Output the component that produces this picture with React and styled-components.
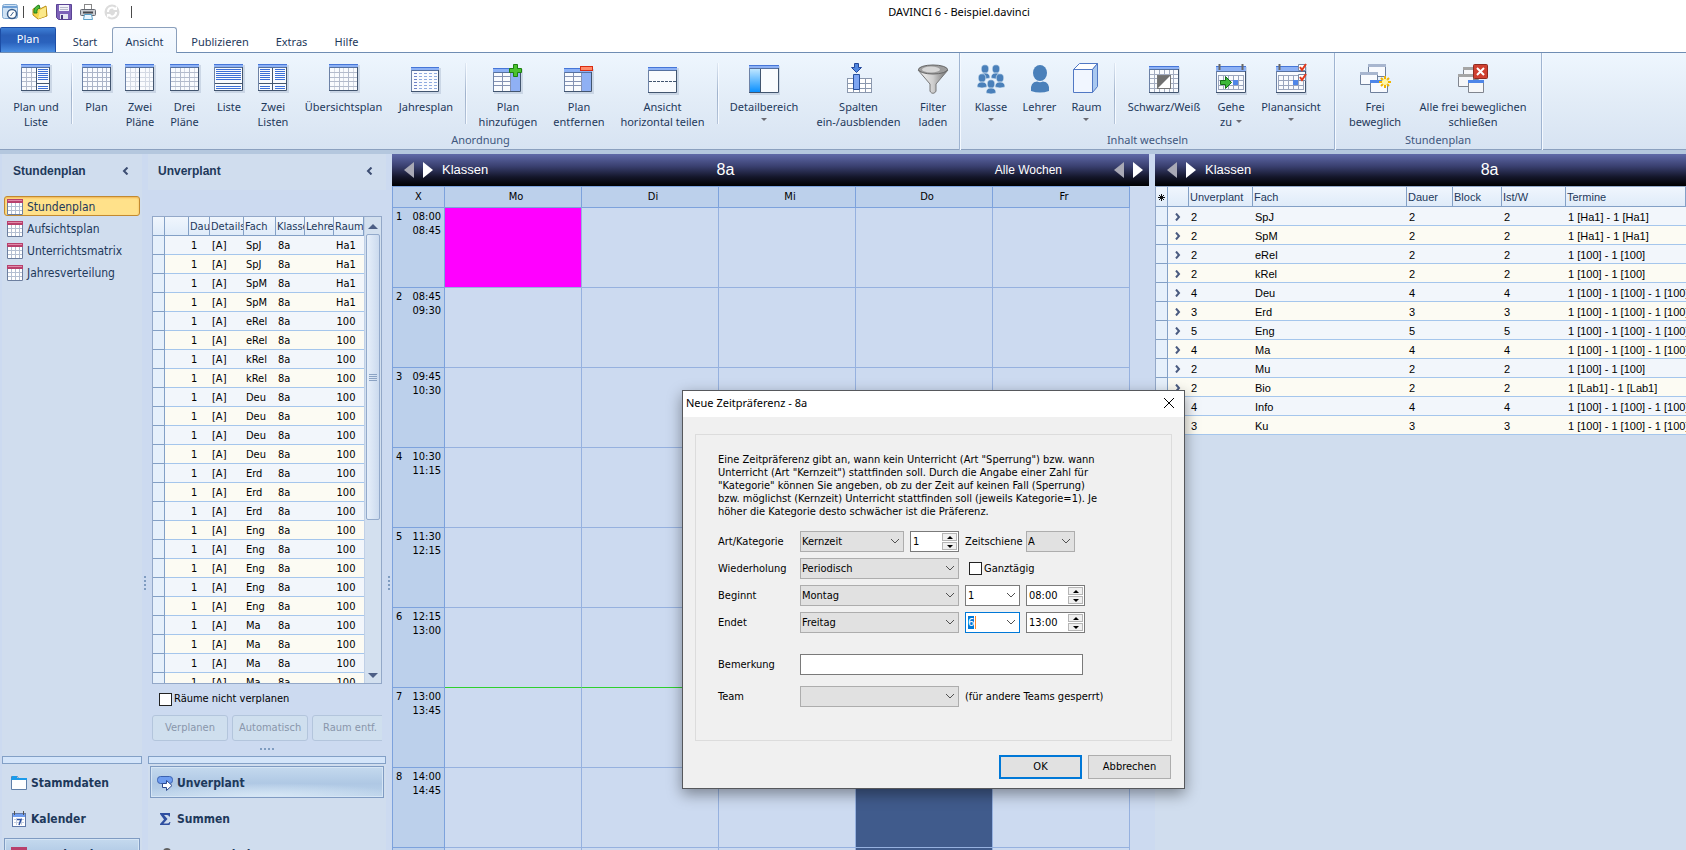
import React, { useEffect, useRef } from 'react';
import styled, { createGlobalStyle, css } from 'styled-components';

const tahoma = '"DejaVu Sans Condensed", "DejaVu Sans", sans-serif';
const segoe = '"Noto Sans", "Open Sans", sans-serif';
const arial = '"Liberation Sans", Arial, sans-serif';

const GlobalStyle = createGlobalStyle`
  * { box-sizing: border-box; }
  body { margin: 0; background: #ccdaf0; font: 11px/14px ${tahoma}; color: #000; }
  button, input, select { font: inherit; color: inherit; margin: 0; }
  svg { display: block; flex: none; }
`;

const Window = styled.div`
  position: relative;
  display: flex;
  flex-direction: column;
  height: 100vh;
  overflow: hidden;
`;

/* ---------- title bar ---------- */
const TitleBar = styled.header`
  display: flex;
  align-items: center;
  height: 24px;
  background: #fff;
`;
const QuickTools = styled.div`
  display: flex;
  align-items: center;
  gap: 8px;
  width: 232px;
  padding-left: 2px;
`;
const IconButton = styled.button`
  display: block;
  padding: 0;
  border: 0;
  background: none;
`;
const ToolDivider = styled.span`
  width: 1px;
  height: 12px;
  margin: 0 ${(p) => (p.$end ? 4 : 0)}px 0 ${(p) => (p.$end ? 3 : -3)}px;
  background: #4a4a4a;
`;
const Title = styled.h1`
  flex: 1;
  margin: 0;
  text-align: center;
  font: 400 11px/16px ${segoe};
`;

/* ---------- ribbon ---------- */
const Tabs = styled.nav`
  display: flex;
  align-items: flex-end;
  height: 29px;
  padding-top: 3px;
  background: #fff;
  border-bottom: 1px solid #6f8db3;
  font: 12px/16px ${segoe};
`;
const FileTab = styled.button`
  width: 56px;
  height: 25px;
  margin-right: 2px;
  padding: 0 0 2px;
  border: 1px solid #1d4ea6;
  border-bottom: 0;
  border-radius: 2px 2px 0 0;
  background: linear-gradient(#3d7fd6, #2a5fb8 30%, #2a62bd 60%, #4a8ee2);
  color: #fff;
  font-size: 11px;
`;
const Tab = styled.button`
  width: ${(p) => p.$w}px;
  height: 25px;
  padding: 3px 0 0;
  border: 1px solid transparent;
  border-bottom: 0;
  background: none;
  color: #1e395b;
  font-size: 11px;
  ${(p) => p.$active && css`
    margin-bottom: -1px;
    height: 26px;
    padding-bottom: 1px;
    border-color: #8ba0bc;
    border-radius: 3px 3px 0 0;
    background: linear-gradient(#f6faff, #edf5fd);
  `}
`;
const Ribbon = styled.section`
  display: flex;
  height: 101px;
  flex: none;
  background: linear-gradient(#eef6fe, #e2ecf7 50%, #d7e3f2);
  border-bottom: 4px solid #b4c7de;
  box-shadow: inset 0 -1px 0 #8ba0bf;
  font: 11px/15px ${segoe};
  color: #1e395b;
`;
const Group = styled.div`
  display: flex;
  flex-direction: column;
  padding: 10px 5px 0 ${(p) => p.$pad}px;
  border-right: 1px solid #9fb4d1;
  box-shadow: 1px 0 0 #f4f9ff;
`;
const GroupTools = styled.div`
  display: flex;
  height: 68px;
`;
const GroupName = styled.div`
  padding-top: 1px;
  text-align: center;
  color: #3f577e;
`;
const Tool = styled.button`
  display: flex;
  flex-direction: column;
  align-items: center;
  gap: 4px;
  width: ${(p) => p.$w}px;
  padding: 0;
  border: 0;
  background: none;
  white-space: nowrap;
`;
const ToolLabel = styled.span`
  display: block;
  text-align: center;
`;
const ToolRule = styled.span`
  width: 1px;
  height: 61px;
  margin: 0 ${(p) => p.$after}px 0 ${(p) => p.$before}px;
  background: linear-gradient(#dfe8f3, #9fb2cc 50%, #b5c4d9);
  box-shadow: 1px 0 0 #f6faff;
`;
const Arrow = styled.i`
  display: ${(p) => (p.$inline ? 'inline-block' : 'block')};
  width: 0;
  margin: ${(p) => (p.$inline ? '0 0 3px 4px' : '4px auto 0')};
  border: 3px solid transparent;
  border-top-color: #6a6a72;
  border-bottom: 0;
`;

/* ---------- workspace ---------- */
const Workspace = styled.main`
  display: flex;
  flex: 1;
  min-height: 0;
  padding-left: 2px;
`;
const SidePanel = styled.aside`
  display: flex;
  flex-direction: column;
  flex: none;
  width: ${(p) => p.$w}px;
  background: ${(p) => p.$bg};
`;
const PanelHead = styled.div`
  display: flex;
  align-items: center;
  justify-content: space-between;
  height: 36px;
  flex: none;
  padding: 0 12px 2px ${(p) => p.$pad}px;
  background: #d0ddee;
  color: #1e395b;
`;
const PanelTitle = styled.h2`
  margin: 0;
  font: 700 12px/16px ${arial};
`;
const Splitter = styled.div`
  display: flex;
  flex-direction: column;
  justify-content: center;
  align-items: center;
  gap: 2px;
  flex: none;
  width: 6px;
  padding-top: 162px;
`;
const Dot = styled.i`
  width: 2px;
  height: 2px;
  background: #7f9cc0;
`;
const NavList = styled.div`
  display: flex;
  flex-direction: column;
  gap: 2px;
  flex: 1;
  padding: 6px 2px 0;
`;
const NavItem = styled.a`
  display: flex;
  align-items: center;
  gap: 4px;
  height: 20px;
  padding: 1px 0 0 2px;
  border: 1px solid ${(p) => (p.$active ? '#c28a30' : 'transparent')};
  border-radius: 3px;
  background: ${(p) => (p.$active ? '#ffe18a' : 'none')};
  box-shadow: ${(p) => (p.$active ? 'inset 0 1px 2px #f0b450' : 'none')};
  color: #1e395b;
  font-size: 12px;
  text-decoration: none;
`;
const Sections = styled.div`
  flex: none;
  height: 94px;
  overflow: hidden;
  background: #d0ddee;
`;
const SectionBar = styled.div`
  height: 8px;
  border: 1px solid #83a0c6;
  background: #d4e5fa;
`;
const SectionLink = styled.a`
  display: flex;
  align-items: center;
  gap: 4px;
  height: 32px;
  margin: 2px 2px 4px;
  padding: 2px 0 0 6px;
  border: 1px solid ${(p) => (p.$active ? '#7f9bc2' : 'transparent')};
  background: ${(p) => (p.$active ? 'radial-gradient(60% 14px at 50% 100%, #d8e8f6, transparent), linear-gradient(#c4d9ee, #afc8e4 55%, #bcd3ea)' : 'none')};
  box-shadow: ${(p) => (p.$active ? 'inset 0 0 0 1px #d5e5f5' : 'none')};
  color: #1e395b;
  font: 700 12px/16px ${tahoma};
  text-decoration: none;
`;

/* ---------- data lists ---------- */
const ListBox = styled.div`
  display: flex;
  flex: 1;
  min-height: 0;
  margin: 26px 4px 0;
  border: 1px solid #93a8c8;
  overflow: hidden;
`;
const DataTable = styled.table`
  width: ${(p) => p.$w};
  flex: none;
  align-self: flex-start;
  table-layout: fixed;
  border-collapse: separate;
  border-spacing: 0;
  font: 11px/14px ${(p) => p.$font};
`;
const Head = styled.th`
  height: ${(p) => p.$h}px;
  padding: 1px 0 0 1px;
  overflow: hidden;
  white-space: nowrap;
  text-align: left;
  font-weight: 400;
  color: #1e395b;
  background: linear-gradient(#f0f6fd, #dfebf9);
  border-right: 1px solid #83a0c6;
  border-bottom: 1px solid #83a0c6;
`;
const Row = styled.tr`
  background: #f2f6fb;
  &:nth-child(even) { background: #fcfbf3; }
`;
const Cell = styled.td`
  height: 19px;
  padding: 1px ${(p) => (p.$center ? 8 : 0)}px 0 2px;
  overflow: hidden;
  white-space: nowrap;
  text-align: ${(p) => (p.$center ? 'center' : 'left')};
  border-bottom: 1px solid #a5c6ec;
`;
const Marker = styled(Cell)`
  background: #e6f0fb;
  border-right: 1px solid #83a0c6;
  border-bottom-color: #83a0c6;
`;
const ExpandMark = styled.svg`
  margin: 0 auto;
`;
const ExpandCell = styled(Cell)`
  padding-right: 4px;
`;
const ScrollBar = styled.div`
  display: flex;
  flex-direction: column;
  align-items: center;
  width: 17px;
  background: #d3e0ef;
  border-left: 1px solid #c0d0e6;
`;
const ScrollArrow = styled.i`
  margin: 7px 0 5px;
  border: 5px solid transparent;
  ${(p) => (p.$up ? 'border-bottom-color: #4d5f86; border-top: 0;' : 'border-top-color: #4d5f86; border-bottom: 0;')}
`;
const Thumb = styled.div`
  display: flex;
  flex-direction: column;
  align-items: center;
  justify-content: center;
  gap: 1px;
  width: 14px;
  height: 286px;
  margin-bottom: auto;
  border: 1px solid #93aacb;
  border-radius: 2px;
  background: linear-gradient(90deg, #e6effa, #cbdaee);
`;
const Grip = styled.i`
  width: 8px;
  height: 1px;
  background: #8ba3c4;
`;
const CheckLabel = styled.label`
  display: flex;
  align-items: center;
  gap: 2px;
  height: ${(p) => p.$h}px;
  padding-left: ${(p) => p.$pad}px;
`;
const CheckBox = styled.input`
  appearance: none;
  width: 13px;
  height: 13px;
  border: 1px solid #222;
  background: #fff;
`;
const ActionRow = styled.div`
  display: flex;
  gap: 4px;
  flex: none;
  height: 27px;
  margin: 0 4px;
  padding-top: 1px;
  overflow: hidden;
`;
const Action = styled.button`
  flex: none;
  width: 76px;
  border: 1px solid #b3c5dc;
  border-radius: 3px;
  background: #cfdfee;
  &:disabled { color: #8996ab; }
`;
const DotRow = styled.div`
  display: flex;
  justify-content: center;
  align-items: center;
  gap: 2px;
  height: 15px;
`;

/* ---------- timetable ---------- */
const View = styled.section`
  display: flex;
  flex-direction: column;
  flex: ${(p) => p.$grow} 1 0;
  min-width: 0;
  overflow: hidden;
  background: ${(p) => p.$bg};
  margin-right: ${(p) => p.$gap}px;
`;
const ViewHead = styled.div`
  display: grid;
  grid-template-columns: minmax(0, ${(p) => p.$before}fr) auto minmax(0, ${(p) => p.$after}fr);
  align-items: center;
  flex: none;
  height: 32px;
  padding: 0 6px 0 12px;
  background: linear-gradient(#5f69a8, #3a4070 38%, #14162a 72%, #000);
  color: #fff;
  font: 13px/16px ${arial};
`;
const ViewPart = styled.div`
  display: flex;
  align-items: center;
  justify-content: ${(p) => (p.$end ? 'flex-end' : 'flex-start')};
  gap: 9px;
  white-space: nowrap;
`;
const ViewName = styled.h2`
  margin: 0;
  font: 400 16px/20px ${arial};
`;
const Weeks = styled.span`
  margin-right: 43px;
  font-size: 12px;
`;
const Plan = styled.div`
  margin-right: 19px;
`;
const PlanTable = styled.table`
  width: 100%;
  table-layout: fixed;
  border-collapse: separate;
  border-spacing: 0;
  border-left: 1px solid #7da2dc;
`;
const DayHead = styled.th`
  height: 22px;
  padding: 0 0 0 ${(p) => p.$pad}px;
  font-weight: 400;
  background: #bcd0eb;
  border: 1px solid #7da2dc;
  border-left: 0;
`;
const TimeHead = styled.th`
  height: 80px;
  padding: 2px 3px 0;
  vertical-align: top;
  font-weight: 400;
  background: #bcd0eb;
  border-right: 1px solid #7da2dc;
  border-bottom: 1px solid #7da2dc;
`;
const TimeText = styled.div`
  display: flex;
  justify-content: space-between;
  text-align: right;
`;
const tones = { core: '#ff00ff', block: '#405b8c', free: '#ccdaf0' };
const Slot = styled.td`
  height: 80px;
  padding: 0;
  background: ${(p) => tones[p.$tone]};
  border-right: 1px solid #96b1df;
  border-bottom: 1px solid ${(p) => (p.$noon ? '#2fd02f' : '#96b1df')};
`;
const LessonBox = styled.div`
  border-left: 1px solid #93a8c8;
  border-top: 1px solid #93a8c8;
`;

/* ---------- dialog ---------- */
const Dialog = styled.div`
  position: absolute;
  left: 682px;
  top: 390px;
  width: 503px;
  border: 1px solid #56585c;
  background: #f0f0f0;
  box-shadow: 0 5px 14px rgba(0, 0, 0, 0.4);
`;
const DialogTitle = styled.div`
  display: flex;
  align-items: center;
  justify-content: space-between;
  height: 26px;
  padding: 0 9px 2px 3px;
  background: #fff;
  font: 11px/16px ${segoe};
`;
const DialogBody = styled.form`
  padding: 17px 12px 9px;
`;
const Frame = styled.div`
  padding: 18px 22px 33px;
  border: 1px solid #dcdcdc;
`;
const Info = styled.p`
  margin: 0 0 13px;
  line-height: 13px;
  white-space: nowrap;
`;
const Field = styled.div`
  display: flex;
  align-items: center;
  gap: 6px;
  height: 21px;
  margin-top: ${(p) => p.$top || 0}px;
`;
const FieldLabel = styled.label`
  width: ${(p) => p.$w}px;
  margin-right: ${(p) => (p.$lead ? -6 : 0)}px;
  white-space: nowrap;
`;
const SelectWrap = styled.span`
  position: relative;
  width: ${(p) => p.$w}px;
  height: 21px;
`;
const Select = styled.select`
  appearance: none;
  width: 100%;
  height: 21px;
  padding: 0 18px 0 1px;
  border: 1px solid #adadad;
  border-radius: 0;
  background: #e1e1e1;
`;
const Combo = styled.input`
  width: 100%;
  height: 21px;
  padding: 0 18px 0 2px;
  border: 1px solid #7a7a7a;
  outline: 0;
  background: #fff;
  &:focus { border-color: #0078d7; }
  &::selection { background: #0078d7; color: #fff; }
`;
const TextCursor = styled.i`
  position: absolute;
  left: 10px;
  top: 4px;
  width: 1px;
  height: 13px;
  background: #ff8728;
`;
const Chevron = styled.svg`
  position: absolute;
  right: 4px;
  top: 7px;
  pointer-events: none;
`;
const SpinBox = styled.span`
  display: flex;
  width: ${(p) => p.$w}px;
  height: 21px;
  padding: 1px;
  border: 1px solid #7a7a7a;
  background: #fff;
`;
const SpinInput = styled.input`
  flex: 1;
  min-width: 0;
  padding: 0 0 0 1px;
  border: 0;
  outline: 0;
`;
const SpinButtons = styled.span`
  display: flex;
  flex-direction: column;
  gap: 1px;
  width: 15px;
`;
const SpinButton = styled.button`
  display: flex;
  align-items: center;
  justify-content: center;
  flex: 1;
  padding: 0;
  border: 1px solid #b5b5b5;
  background: #f0f0f0;
`;
const Triangle = styled.i`
  border: 3px solid transparent;
  ${(p) => (p.$up ? 'border-bottom-color: #000; border-top: 0;' : 'border-top-color: #000; border-bottom: 0;')}
`;
const TextInput = styled.input`
  width: 283px;
  height: 21px;
  border: 1px solid #7a7a7a;
  background: #fff;
`;
const Footer = styled.div`
  display: flex;
  justify-content: flex-end;
  gap: 6px;
  margin: 14px 1px 0 0;
`;
const DialogButton = styled.button`
  width: 83px;
  height: 24px;
  padding: 0;
  border: ${(p) => (p.$primary ? '2px solid #0078d7' : '1px solid #adadad')};
  background: #e1e1e1;
`;

/* ---------- icons ---------- */
const SheetFrame = ({ x = 1, y = 1, w = 29, h = 27, bar = 3, children }) => (
  <>
    <rect x={x + 1} y={y + 1} width={w + 1} height={h + 1} fill="#b9c6d8" opacity=".6" />
    <rect x={x} y={y} width={w} height={h} fill="#f9fbfe" />
    {children}
    <rect x={x} y={y} width={w} height={bar} fill="#8db1f5" />
    <path d={`M${x} ${y + 0.5}h${w}`} stroke="#4676d8" />
    <path d={`M${x} ${y + bar + 0.5}h${w}`} stroke="#56719f" />
    <path d={`M${x + 0.5} ${y + bar}v${h - bar}`} stroke="#6d82a6" />
    <path d={`M${x + w - 0.5} ${y + bar}V${y + h - 0.5}H${x}`} stroke="#42556f" fill="none" />
  </>
);
const lines = (xs, y1, y2) => xs.map((x) => `M${x + 0.5} ${y1}V${y2}`).join('');
const rows = (ys, x1, x2) => ys.map((y) => `M${x1} ${y + 0.5}H${x2}`).join('');

const sheets = {
  planList: (
    <SheetFrame>
      <path d={lines([6, 11], 4, 27) + rows([9, 14, 18, 23], 1, 16)} stroke="#b3bbcc" />
      <path d={rows([6, 8, 10, 12, 14, 16, 23, 25], 18, 28)} stroke="#3c6fd6" />
      <path d="M16.5 1V28M16 20.5H30" stroke="#42556f" />
    </SheetFrame>
  ),
  plan: (
    <SheetFrame>
      <path d={lines([6, 11, 16, 21, 25], 4, 27) + rows([9, 14, 18, 23], 1, 29)} stroke="#abb4c8" />
    </SheetFrame>
  ),
  two: (
    <SheetFrame>
      <path d={lines([6, 11, 21, 25], 4, 27) + rows([9, 14, 18, 23], 1, 29)} stroke="#d3d9e4" />
      <path d="M15.5 1V28" stroke="#42556f" />
    </SheetFrame>
  ),
  three: (
    <SheetFrame>
      <path d={lines([6, 15, 25], 4, 27)} stroke="#d3d9e4" />
      <path d={lines([11, 20], 4, 27) + rows([9, 14, 18, 23], 1, 29)} stroke="#b3bbcc" />
    </SheetFrame>
  ),
  list: (
    <SheetFrame>
      <path d={rows([6, 8, 10, 12, 14, 16, 23, 25], 3, 28)} stroke="#3c6fd6" />
      <path d="M1 20.5H30" stroke="#42556f" />
    </SheetFrame>
  ),
  twoLists: (
    <SheetFrame>
      <path d={rows([6, 8, 10, 12, 14, 16, 23, 25], 3, 13) + rows([6, 8, 10, 12, 14, 16, 23, 25], 18, 28)} stroke="#3c6fd6" />
      <path d="M1 20.5H30M15.5 1V28" stroke="#42556f" />
    </SheetFrame>
  ),
  year: (
    <SheetFrame y={4} h={25} w={28}>
      {[4, 9, 14, 19, 24].map((x) => (
        <path key={x} d={rows([10, 13, 16, 19, 22, 25], x, x + 3)} stroke={x === 4 ? '#6d82c6' : '#8fabdf'} />
      ))}
    </SheetFrame>
  ),
  add: (
    <>
      <SheetFrame y={5} h={24} w={28} bar={4}>
        <rect x="19" y="5" width="9" height="23" fill="#8fb0f4" />
        <path d={lines([10, 18], 5, 28) + rows([13, 18, 22], 1, 19)} stroke="#8492b3" />
      </SheetFrame>
      <path d="M21.500 1.500h4v4h4v4h-4v4h-4v-4h-4v-4h4z" fill="#4cc22e" stroke="#1d8011" />
    </>
  ),
  remove: (
    <>
      <SheetFrame y={5} h={24} w={28} bar={4}>
        <rect x="19" y="5" width="9" height="23" fill="#8fb0f4" />
        <path d={lines([10, 18], 5, 28) + rows([13, 18, 22], 1, 19)} stroke="#8492b3" />
      </SheetFrame>
      <rect x="17.500" y="3.500" width="12" height="4" fill="#ff8a6a" stroke="#d92c12" />
    </>
  ),
  split: (
    <SheetFrame y={4} h={26} w={29}>
      <path d="M2 18.500H30" stroke="#42556f" strokeDasharray="3 1" />
    </SheetFrame>
  ),
  detail: (
    <>
      <defs>
        <linearGradient id="sky" x2="0" y2="1"><stop stopColor="#bfe6ff" /><stop offset="1" stopColor="#0a90ff" /></linearGradient>
      </defs>
      <SheetFrame y={2} h={28} w={30}>
        <rect x="2" y="6" width="10" height="23" fill="url(#sky)" />
        <path d="M12.500 6V29" stroke="#42556f" />
      </SheetFrame>
    </>
  ),
  columns: (
    <>
      <path d="M4 16h25v14h-25z" fill="#fff" />
      <path d={lines([4, 10, 16, 22, 28], 15, 30) + rows([15, 20, 25, 29], 4, 29)} stroke="#8b98ae" />
      <path d="M10.500 11.500h6v15h-6z" fill="#7ea6f2" stroke="#27509f" />
      <path d="M11.500 .5h4v4h3l-5 5l-5-5h3z" fill="#4f86e0" stroke="#24489b" />
    </>
  ),
  filter: (
    <>
      <defs>
        <linearGradient id="steel"><stop stopColor="#f4f4f4" /><stop offset=".5" stopColor="#cfcfcf" /><stop offset="1" stopColor="#6c6c6c" /></linearGradient>
      </defs>
      <path d="M1 7L13 21V28C14 31 18 31 19 28V21L31 7z" fill="url(#steel)" stroke="#777" />
      <ellipse cx="16" cy="6.500" rx="14.500" ry="4.500" fill="#9d9d9d" stroke="#666" />
      <ellipse cx="14" cy="6.500" rx="9" ry="3" fill="#d6d6d6" />
    </>
  ),
  people: (
    <g fill="#4a80ba">
      {[[10, 6], [21, 6], [7, 15], [25, 15], [16, 21]].map(([x, y]) => (
        <g key={x}>
          <ellipse cx={x} cy={y} rx="3.800" ry="4.200" stroke="#e8f1fa" strokeWidth=".6" />
          <path d={`M${x - 5} ${y + 9}q0-5 5-5t5 5q-5 2-10 0z`} stroke="#e8f1fa" strokeWidth=".6" />
        </g>
      ))}
    </g>
  ),
  person: (
    <g fill="#4a80ba">
      <ellipse cx="16" cy="10" rx="7" ry="8" />
      <path d="M7 28q-1-9 6-9.500q3 1.500 6 0q7 .5 6 9.500q-9 3-18 0z" />
    </g>
  ),
  cube: (
    <g stroke="#5178c4" strokeLinejoin="round">
      <path d="M2.500 6.500L8.500 .5H26.500L21.500 6.500z" fill="#fff" />
      <path d="M21.500 6.500L26.500 .5V23.500L21.500 29.500z" fill="#a9c8f0" />
      <path d="M2.500 6.500H21.500V29.500H2.500z" fill="#f1f6ff" />
    </g>
  ),
  contrast: (
    <SheetFrame x={1} y={3} h={27} w={30}>
      <path d={lines([6, 11, 16, 21, 25], 7, 29) + rows([11, 15, 20, 25], 1, 30)} stroke="#a3acc0" />
      <rect x="9.500" y="12.500" width="13" height="13" fill="#fff" stroke="#777" />
      <path d="M10 13H22L10 25z" fill="#707070" />
    </SheetFrame>
  ),
  goTo: (
    <>
      <SheetFrame x={1} y={3} h={27} w={30} bar={5}>
        <path d={lines([3, 8, 13, 18, 23, 28], 12, 27) + rows([12, 17, 22, 26], 3, 28)} stroke="#9aa5bd" />
        <rect x="18" y="17" width="5" height="5" fill="#4f86e8" />
      </SheetFrame>
      <path d="M5.500 17.500h5v-4l6 6l-6 6v-4h-5z" fill="#3cb83a" stroke="#156c17" />
      <path d="M4.500 1v6M27.500 1v6" stroke="#666" strokeWidth="2" />
    </>
  ),
  planView: (
    <>
      <SheetFrame x={1} y={3} h={27} w={30} bar={5}>
        <path d={lines([3, 8, 13, 18, 23, 28], 12, 27) + rows([12, 17, 22, 26], 3, 28)} stroke="#9aa5bd" />
        <rect x="18" y="17" width="5" height="5" fill="#4f86e8" />
      </SheetFrame>
      <path d="M4.500 1v6" stroke="#666" strokeWidth="2" />
      <path d="M23.500 1.500h7v6h-7zM23.500 11.500h7v6h-7z" fill="#fff" stroke="#7a8aa5" />
      <path d="M25 4l2 3l4-6M25 14l2 3l4-6" stroke="#e33a1c" strokeWidth="2" fill="none" />
    </>
  ),
  free: (
    <>
      {[[9, 1, '#a8b6cf'], [1, 9, '#a8b6cf'], [11, 17, '#4f86e8']].map(([x, y, c]) => (
        <g key={x}>
          <path d={`M${x + 0.5} ${y + 0.5}h17v12h-17z`} fill="#f8fafe" stroke="#6f809c" />
          <path d={`M${x} ${y + 1.5}h18`} stroke={c} strokeWidth="3" />
        </g>
      ))}
      <path d="M26 13v12M20 19h12M22 15l8 8M30 15l-8 8" stroke="#f0b400" strokeWidth="2" />
      <circle cx="26" cy="19" r="3" fill="#fff6a8" />
    </>
  ),
  closeAll: (
    <>
      {[[6, 4, '#a5a5a5'], [1, 11, '#a5a5a5'], [11, 17, '#4f86e8']].map(([x, y, c]) => (
        <g key={x}>
          <path d={`M${x + 0.5} ${y + 0.5}h15v12h-15z`} fill="#f6f7f9" stroke="#80858f" />
          <path d={`M${x} ${y + 1.5}h16`} stroke={c} strokeWidth="3" />
        </g>
      ))}
      <rect x="16.500" y="1.500" width="14" height="14" rx="1" fill="#cf4030" stroke="#8e2a20" />
      <path d="M20 5l7 7M27 5l-7 7" stroke="#fff" strokeWidth="2" />
    </>
  ),
};
const Sheet = ({ name }) => <svg width="32" height="32" fill="none" aria-hidden="true">{sheets[name]}</svg>;

const RedTable = () => (
  <svg width="16" height="16" aria-hidden="true">
    <rect width="16" height="16" fill="#fff" />
    <rect width="16" height="4" fill="#b8406c" />
    <path d="M1 1.500H15" stroke="#e08aa8" />
    <path d="M4.500 4V15M8.500 4V15M12.500 4V15M1 7.500H15M1 11.500H15" stroke="#b4bfd2" fill="none" />
    <path d="M.5 4V15.500H15.500V4" stroke="#6d7f9f" fill="none" />
  </svg>
);
const Back = ({ c }) => (
  <svg width="10" height="16" aria-hidden="true"><path d="M10 0V16L0 8z" fill={c} /></svg>
);
const Forward = () => (
  <svg width="10" height="16" aria-hidden="true"><path d="M0 0V16L10 8z" fill="#fff" /></svg>
);
const Collapse = () => (
  <svg width="8" height="8" aria-hidden="true"><path d="M5.500 .5L2 4L5.500 7.500" fill="none" stroke="#3c4d72" strokeWidth="2" /></svg>
);
const Expand = () => (
  <ExpandMark width="6" height="8" aria-hidden="true"><path d="M1 .5L4 4L1 7.500" fill="none" stroke="#4a5b80" strokeWidth="2" /></ExpandMark>
);
const Star = () => (
  <svg width="9" height="9" aria-hidden="true"><path d="M4.500 1V8M1 4.500H8M2 2L7 7M7 2L2 7" stroke="#111" /></svg>
);
const Caret = () => (
  <Chevron width="10" height="7" aria-hidden="true"><path d="M1 1L5 5L9 1" fill="none" stroke="#505050" /></Chevron>
);

const quickIcons = [
  ['Stundenplan-Übersicht', (
    <>
      <rect x=".5" y=".5" width="15" height="14" rx="2" fill="#cfe2f4" stroke="#7fa7cf" />
      <path d="M1 3H15" stroke="#6fa0d6" strokeWidth="2" />
      <circle cx="10" cy="10" r="4.500" fill="#fff" stroke="#3b5f8c" strokeWidth="1.500" />
      <path d="M8.500 12L11.500 8" stroke="#3b5f8c" />
    </>
  )],
  ['Öffnen', (
    <>
      <path d="M1 5L6 3L8 5L14 2L15 12L6 15L1 11z" fill="#f6d64a" stroke="#b98c14" />
      <path d="M8 6L14 3V12L6 15z" fill="#fbe98a" />
      <path d="M2 9Q1 3 7 1L8 4Q4 5 5 9z" fill="#4cb83a" stroke="#23801a" />
    </>
  )],
  ['Speichern', (
    <>
      <path d="M.5 .5h15v15h-13l-2-2z" fill="#7d62b8" stroke="#5a4494" />
      <rect x="3" y="1" width="10" height="6" fill="#f2f2fa" />
      <path d="M4 3.500H12M4 5.500H12" stroke="#b9b9cc" />
      <rect x="4" y="10" width="8" height="5" fill="#e6e6f2" />
      <rect x="5" y="11" width="2" height="4" fill="#4a3a80" />
    </>
  )],
  ['Drucken', (
    <>
      <rect x="4.500" y=".5" width="7" height="6" fill="#fff" stroke="#888" />
      <rect x=".5" y="5.500" width="15" height="6" rx="1" fill="#c9ccd1" stroke="#666a72" />
      <path d="M3 8.500H13" stroke="#44484f" strokeWidth="2" />
      <path d="M4.500 10.500H11.500L12.500 15.500H3.500z" fill="#eaf6ff" stroke="#5aa0c8" />
    </>
  )],
  ['Aktualisieren', (
    <>
      <circle cx="8" cy="8" r="7.500" fill="#dcdcdc" />
      <path d="M4 8A4 4 0 0 1 11 5M12 8A4 4 0 0 1 5 11" fill="none" stroke="#fff" strokeWidth="2" />
      <path d="M9 6H13V2zM7 10H3V14z" fill="#fff" />
    </>
  )],
];
const QuickIcon = ({ item }) => (
  <IconButton type="button" aria-label={item[0]}>
    <svg width="16" height="16" aria-hidden="true">{item[1]}</svg>
  </IconButton>
);

const sectionIcons = {
  folder: (
    <>
      <path d="M.5 3.500V1.500H6.500L7.500 3.500H15.500V14.500H.5z" fill="#fff" stroke="#5f7fa8" />
      <path d="M0 3H16V5H0zM1 1H6V3H1z" fill="#1d9bea" />
    </>
  ),
  calendar: (
    <>
      <rect x="1.500" y="2.500" width="13" height="13" fill="#fff" stroke="#5f78a8" />
      <path d="M2 3H14V6H2z" fill="#6f9df0" />
      <path d="M3.500 0V4M12.500 0V4" stroke="#555" />
      <path d="M3 8.500H13M3 11.500H13M5.500 7V14M10.500 7V14" stroke="#c3cde0" />
      <path d="M6 8.500H10L8 14" stroke="#2d4f9e" strokeWidth="1.500" fill="none" />
    </>
  ),
  table: (
    <>
      <rect width="16" height="16" fill="#fff" />
      <rect width="16" height="4" fill="#b8406c" />
      <path d="M4.500 4V15M8.500 4V15M12.500 4V15M1 7.500H15" stroke="#8a98b3" />
    </>
  ),
  unplanned: (
    <>
      <rect x=".5" y="1.500" width="15" height="7" rx="3" fill="#6f9df0" stroke="#3b62b0" />
      <path d="M5.500 8.500H9.500V5.500L15 10.500L9.500 15.500V12.500H5.500z" fill="#fff" stroke="#2d4a90" />
    </>
  ),
  sum: <path d="M3 2H13V5.500H12Q12 4 10 4H7L10.500 8L6.500 12.500H10Q12 12.500 12.500 11H13.500L12.500 14H3V13L7 8.500L3 3z" fill="#2f4fa0" />,
  people: (
    <>
      <circle cx="10" cy="5" r="4" fill="#5f5f5f" />
      <circle cx="6" cy="8" r="4" fill="#c0963c" />
    </>
  ),
};
const SectionIcon = ({ name }) => <svg width="16" height="16" aria-hidden="true">{sectionIcons[name]}</svg>;

/* ---------- data ---------- */
const arrangement = [
  [
    { w: 58, icon: 'planList', text: ['Plan und', 'Liste'] },
    { rule: [6, 3] },
    { w: 43, icon: 'plan', text: ['Plan'] },
    { w: 44, icon: 'two', text: ['Zwei', 'Pläne'] },
    { w: 45, icon: 'three', text: ['Drei', 'Pläne'] },
    { w: 44, icon: 'list', text: ['Liste'] },
    { w: 44, icon: 'twoLists', text: ['Zwei', 'Listen'] },
    { w: 97, icon: 'three', text: ['Übersichtsplan'] },
    { w: 68, icon: 'year', text: ['Jahresplan'] },
    { rule: [5, 6] },
    { w: 72, icon: 'add', text: ['Plan', 'hinzufügen'] },
    { w: 70, icon: 'remove', text: ['Plan', 'entfernen'] },
    { w: 97, icon: 'split', text: ['Ansicht', 'horizontal teilen'] },
    { rule: [6, 5] },
    { w: 82, icon: 'detail', text: ['Detailbereich'], menu: true },
    { w: 107, icon: 'columns', text: ['Spalten', 'ein-/ausblenden'] },
    { w: 42, icon: 'filter', text: ['Filter', 'laden'] },
  ],
  [
    { w: 50, icon: 'people', text: ['Klasse'], menu: true },
    { w: 47, icon: 'person', text: ['Lehrer'], menu: true },
    { w: 47, icon: 'cube', text: ['Raum'], menu: true },
    { rule: [4, 4] },
    { w: 90, icon: 'contrast', text: ['Schwarz/Weiß'] },
    { w: 44, icon: 'goTo', text: ['Gehe', 'zu'], menu: 'inline' },
    { w: 76, icon: 'planView', text: ['Planansicht'], menu: true },
  ],
  [
    { w: 70, icon: 'free', text: ['Frei', 'beweglich'] },
    { w: 126, icon: 'closeAll', text: ['Alle frei beweglichen', 'schließen'] },
  ],
];
const groupNames = ['Anordnung', 'Inhalt wechseln', 'Stundenplan'];
const groupPads = [7, 6, 5];

const openLessons = [
  ...Array(2).fill(['SpJ', 'Ha1']),
  ...Array(2).fill(['SpM', 'Ha1']),
  ...Array(2).fill(['eRel', '100']),
  ...Array(2).fill(['kRel', '100']),
  ...Array(4).fill(['Deu', '100']),
  ...Array(3).fill(['Erd', '100']),
  ...Array(5).fill(['Eng', '100']),
  ...Array(4).fill(['Ma', '100']),
];
const days = ['Mo', 'Di', 'Mi', 'Do', 'Fr'];
const periods = [
  ['08:00', '08:45'], ['08:45', '09:30'], ['09:45', '10:30'], ['10:30', '11:15'], ['11:30', '12:15'],
  ['12:15', '13:00'], ['13:00', '13:45'], ['14:00', '14:45'], ['14:45', '15:30'],
];
const subjects = [
  ['SpJ', 2, 'Ha1'], ['SpM', 2, 'Ha1'], ['eRel', 2, '100'], ['kRel', 2, '100'], ['Deu', 4, '100'], ['Erd', 3, '100'],
  ['Eng', 5, '100'], ['Ma', 4, '100'], ['Mu', 2, '100'], ['Bio', 2, 'Lab1'], ['Info', 4, '100'], ['Ku', 3, '100'],
];
const slotTone = (row, day) => {
  if (row === 0 && day === 'Mo') return 'core';
  if (row >= 7 && day === 'Do') return 'block';
  return 'free';
};

/* ---------- composed parts ---------- */
const RibbonTool = ({ item }) => (
  <Tool type="button" $w={item.w}>
    <Sheet name={item.icon} />
    <ToolLabel>
      {item.text[0]}
      {item.text[1] && <><br />{item.text[1]}</>}
      {item.menu && <Arrow $inline={item.menu === 'inline'} />}
    </ToolLabel>
  </Tool>
);

const Columns = ({ widths }) => (
  <colgroup>{widths.map((w, i) => <col key={i} width={w} />)}</colgroup>
);

const Dots = () => <><Dot /><Dot /><Dot /><Dot /></>;

const OpenLessons = () => (
  <ListBox>
    <DataTable $w="211px" $font={tahoma}>
      <Columns widths={[12, 24, 21, 34, 32, 29, 29, 30]} />
      <thead>
        <tr>{['', '', 'Dauer', 'Details', 'Fach', 'Klasse', 'Lehrer', 'Raum'].map((h, i) => <Head key={i} $h={19}>{h}</Head>)}</tr>
      </thead>
      <tbody>
        {openLessons.map(([subject, room], i) => (
          <Row key={i}>
            <Marker />
            <Cell />
            <Cell>1</Cell>
            <Cell>[A]</Cell>
            <Cell>{subject}</Cell>
            <Cell>8a</Cell>
            <Cell />
            <Cell $center>{room}</Cell>
          </Row>
        ))}
      </tbody>
    </DataTable>
    <ScrollBar>
      <ScrollArrow $up />
      <Thumb><Grip /><Grip /><Grip /><Grip /></Thumb>
      <ScrollArrow />
    </ScrollBar>
  </ListBox>
);

const Timetable = () => (
  <Plan>
    <PlanTable>
      <colgroup><col width="52" />{days.map((d) => <col key={d} />)}</colgroup>
      <thead><tr><DayHead $pad={0}>X</DayHead>{days.map((d) => <DayHead key={d} $pad={6}>{d}</DayHead>)}</tr></thead>
      <tbody>
        {periods.map(([from, to], row) => (
          <tr key={from + row}>
            <TimeHead><TimeText><span>{row + 1}</span><span>{from}<br />{to}</span></TimeText></TimeHead>
            {days.map((d) => <Slot key={d} $tone={slotTone(row, d)} $noon={row === 5} />)}
          </tr>
        ))}
      </tbody>
    </PlanTable>
  </Plan>
);

const Lessons = () => (
  <LessonBox>
    <DataTable $w="100%" $font={arial}>
      <Columns widths={[12, 21, 64, 154, 46, 49, 64, undefined]} />
      <thead>
        <tr>{[<Star key="star" />, '', 'Unverplant', 'Fach', 'Dauer', 'Block', 'Ist/W', 'Termine'].map((h, i) => <Head key={i} $h={20}>{h}</Head>)}</tr>
      </thead>
      <tbody>
        {subjects.map(([name, count, room]) => (
          <Row key={name}>
            <Marker />
            <ExpandCell><Expand /></ExpandCell>
            <Cell>{count}</Cell>
            <Cell>{name}</Cell>
            <Cell>{count}</Cell>
            <Cell />
            <Cell>{count}</Cell>
            <Cell>{Array(count).fill(`1 [${room}]`).join(' - ')}</Cell>
          </Row>
        ))}
      </tbody>
    </DataTable>
  </LessonBox>
);

const DropDown = ({ id, w, value }) => (
  <SelectWrap $w={w}>
    <Select id={id} defaultValue={value}><option>{value}</option></Select>
    <Caret />
  </SelectWrap>
);
const Spinner = ({ w, value, label }) => (
  <SpinBox $w={w}>
    <SpinInput aria-label={label} defaultValue={value} />
    <SpinButtons>
      <SpinButton type="button" aria-label="Erhöhen"><Triangle $up /></SpinButton>
      <SpinButton type="button" aria-label="Verringern"><Triangle /></SpinButton>
    </SpinButtons>
  </SpinBox>
);

const PreferenceDialog = () => {
  const endPeriod = useRef(null);
  useEffect(() => {
    endPeriod.current.focus();
    endPeriod.current.select();
  }, []);
  return (
    <Dialog role="dialog" aria-labelledby="dialog-title">
      <DialogTitle>
        <span id="dialog-title">Neue Zeitpräferenz - 8a</span>
        <IconButton type="button" aria-label="Schließen">
          <svg width="12" height="12"><path d="M1 1L11 11M11 1L1 11" stroke="#000" /></svg>
        </IconButton>
      </DialogTitle>
      <DialogBody onSubmit={(e) => e.preventDefault()}>
        <Frame>
          <Info>
            Eine Zeitpräferenz gibt an, wann kein Unterricht (Art "Sperrung") bzw. wann<br />
            Unterricht (Art "Kernzeit") stattfinden soll. Durch die Angabe einer Zahl für<br />
            "Kategorie" können Sie angeben, ob zu der Zeit auf keinen Fall (Sperrung)<br />
            bzw. möglichst (Kernzeit) Unterricht stattfinden soll (jeweils Kategorie=1). Je<br />
            höher die Kategorie desto schwächer ist die Präferenz.
          </Info>
          <Field>
            <FieldLabel $w={82} $lead htmlFor="art">Art/Kategorie</FieldLabel>
            <DropDown id="art" w={104} value="Kernzeit" />
            <Spinner w={49} value="1" label="Kategorie" />
            <FieldLabel $w={55} htmlFor="schiene">Zeitschiene</FieldLabel>
            <DropDown id="schiene" w={49} value="A" />
          </Field>
          <Field $top={6}>
            <FieldLabel $w={82} $lead htmlFor="wiederholung">Wiederholung</FieldLabel>
            <DropDown id="wiederholung" w={159} value="Periodisch" />
            <CheckLabel $h={21} $pad={4}><CheckBox type="checkbox" />Ganztägig</CheckLabel>
          </Field>
          <Field $top={6}>
            <FieldLabel $w={82} $lead htmlFor="beginnt">Beginnt</FieldLabel>
            <DropDown id="beginnt" w={159} value="Montag" />
            <SelectWrap $w={55}><Combo aria-label="Erste Stunde" defaultValue="1" /><Caret /></SelectWrap>
            <Spinner w={59} value="08:00" label="Beginnt um" />
          </Field>
          <Field $top={6}>
            <FieldLabel $w={82} $lead htmlFor="endet">Endet</FieldLabel>
            <DropDown id="endet" w={159} value="Freitag" />
            <SelectWrap $w={55}><Combo ref={endPeriod} aria-label="Letzte Stunde" defaultValue="6" /><TextCursor /><Caret /></SelectWrap>
            <Spinner w={59} value="13:00" label="Endet um" />
          </Field>
          <Field $top={21}>
            <FieldLabel $w={82} $lead htmlFor="bemerkung">Bemerkung</FieldLabel>
            <TextInput id="bemerkung" />
          </Field>
          <Field $top={11}>
            <FieldLabel $w={82} $lead htmlFor="team">Team</FieldLabel>
            <DropDown id="team" w={159} value="" />
            <span>(für andere Teams gesperrt)</span>
          </Field>
        </Frame>
        <Footer>
          <DialogButton $primary>OK</DialogButton>
          <DialogButton type="button">Abbrechen</DialogButton>
        </Footer>
      </DialogBody>
    </Dialog>
  );
};

const PanelHeader = ({ title, pad }) => (
  <PanelHead $pad={pad}>
    <PanelTitle>{title}</PanelTitle>
    <IconButton type="button" aria-label={`${title} einklappen`}><Collapse /></IconButton>
  </PanelHead>
);

const SectionNav = ({ items, active }) => (
  <Sections>
    <SectionBar />
    {items.map(([icon, text]) => (
      <SectionLink key={text} href="#" $active={text === active}><SectionIcon name={icon} />{text}</SectionLink>
    ))}
  </Sections>
);

export default function App() {
  return (
    <Window>
      <GlobalStyle />
      <TitleBar>
        <QuickTools>
          <QuickIcon item={quickIcons[0]} />
          <ToolDivider />
          {quickIcons.slice(1).map((q) => <QuickIcon key={q[0]} item={q} />)}
          <ToolDivider $end />
        </QuickTools>
        <Title>DAVINCI 6 - Beispiel.davinci</Title>
      </TitleBar>
      <Tabs>
        <FileTab type="button">Plan</FileTab>
        <Tab type="button" $w={54}>Start</Tab>
        <Tab type="button" $w={65} $active>Ansicht</Tab>
        <Tab type="button" $w={86}>Publizieren</Tab>
        <Tab type="button" $w={57}>Extras</Tab>
        <Tab type="button" $w={53}>Hilfe</Tab>
      </Tabs>
      <Ribbon>
        {arrangement.map((items, g) => (
          <Group key={g} $pad={groupPads[g]}>
            <GroupTools>
              {items.map((item, i) => (item.rule
                ? <ToolRule key={i} $before={item.rule[0]} $after={item.rule[1]} />
                : <RibbonTool key={i} item={item} />))}
            </GroupTools>
            <GroupName>{groupNames[g]}</GroupName>
          </Group>
        ))}
      </Ribbon>
      <Workspace>
        <SidePanel $w={140} $bg="#d0ddee">
          <PanelHeader title="Stundenplan" pad={11} />
          <NavList>
            {['Stundenplan', 'Aufsichtsplan', 'Unterrichtsmatrix', 'Jahresverteilung'].map((t, i) => (
              <NavItem key={t} href="#" $active={i === 0}><RedTable />{t}</NavItem>
            ))}
          </NavList>
          <SectionNav active="Stundenplan" items={[['folder', 'Stammdaten'], ['calendar', 'Kalender'], ['table', 'Stundenplan']]} />
        </SidePanel>
        <Splitter><Dots /></Splitter>
        <SidePanel $w={238} $bg="#ccdaf0">
          <PanelHeader title="Unverplant" pad={10} />
          <OpenLessons />
          <CheckLabel $h={30} $pad={11}><CheckBox type="checkbox" />Räume nicht verplanen</CheckLabel>
          <ActionRow>
            <Action type="button" disabled>Verplanen</Action>
            <Action type="button" disabled>Automatisch</Action>
            <Action type="button" disabled>Raum entf.</Action>
          </ActionRow>
          <DotRow><Dots /></DotRow>
          <SectionNav active="Unverplant" items={[['unplanned', 'Unverplant'], ['sum', 'Summen'], ['people', 'Anwesenheit']]} />
        </SidePanel>
        <Splitter><Dots /></Splitter>
        <View $grow={757} $bg="#ccdaf0" $gap={6}>
          <ViewHead $before={13} $after={17}>
            <ViewPart><Back c="#a9a9b5" /><Forward />Klassen</ViewPart>
            <ViewName>8a</ViewName>
            <ViewPart $end><Weeks>Alle Wochen</Weeks><Back c="#a9a9b5" /><Forward /></ViewPart>
          </ViewHead>
          <Timetable />
        </View>
        <View $grow={531} $bg="#d0ddee" $gap={0}>
          <ViewHead $before={19} $after={11}>
            <ViewPart><Back c="#a9a9b5" /><Forward />Klassen</ViewPart>
            <ViewName>8a</ViewName>
            <ViewPart $end />
          </ViewHead>
          <Lessons />
        </View>
      </Workspace>
      <PreferenceDialog />
    </Window>
  );
}
